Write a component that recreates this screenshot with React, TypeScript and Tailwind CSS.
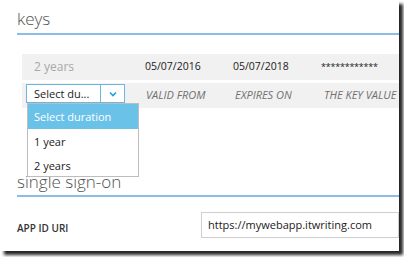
const font = { fontFamily: '"Open Sans", "Noto Sans", sans-serif' };

const Chevron = () => (
  <svg width="8" height="6" viewBox="0 0 8 6" className="block">
    <polyline points="1,1.5 4,4.5 7,1.5" fill="none" stroke="#1ba1e2" strokeWidth="1.6" />
  </svg>
);

const App = () => {
  const options = ["Select duration", "1 year", "2 years"];

  return (
    <div className="w-[404px] h-[257px] bg-white" style={font}>
      <div className="relative w-[399px] h-[251px] bg-white shadow-[4px_4px_3px_rgba(0,0,0,0.85)]">
        <div className="w-[399px] h-[251px] overflow-hidden">
          {/* keys */}
          <div className="pl-[17px] pt-[8px] h-[33px] text-[17px] font-light text-[#505050] leading-[22px]">
            keys
          </div>
          <div className="ml-[17px] h-[2px] bg-[#8cbde8]" />

          <div className="ml-[22px] mt-[19px]">
            <div className="flex items-center h-[26px] bg-[#f1f1f1] text-[10.5px] text-[#222]">
              <div className="w-[123px] pl-[12px] text-[12px] text-[#a8a8a8]">2 years</div>
              <div className="w-[88px]">05/07/2016</div>
              <div className="w-[88px]">05/07/2018</div>
              <div className="text-[9px] tracking-tight">************</div>
            </div>
            <div className="flex items-start h-[25px] mt-[3px] bg-[#f1f1f1]">
              <div className="w-[123px] pl-[4px] pt-[1px]">
                <div className="flex h-[19px] w-[99px] border border-[#6cb6e4] bg-white">
                  <div className="w-[74px] pl-[7px] text-[11px] leading-[17px] text-[#222] border-r border-[#6cb6e4]">
                    Select du...
                  </div>
                  <div className="flex-1 flex items-center justify-center">
                    <Chevron />
                  </div>
                </div>
              </div>
              <div className="flex items-center h-[25px] text-[11px] italic text-[#707070]">
                <div className="w-[88px] pl-[1px]">VALID FROM</div>
                <div className="w-[88px] pl-[2px]">EXPIRES ON</div>
                <div className="pl-[3px] whitespace-nowrap">THE KEY VALUE</div>
              </div>
            </div>
          </div>

          {/* single sign-on */}
          <div className="pl-[17px] mt-[64px] h-[23px] text-[17px] font-light text-[#505050] leading-[20px]">
            single sign-on
          </div>
          <div className="ml-[17px] h-[2px] bg-[#8cbde8]" />

          <div className="flex items-center mt-[15px] h-[26px]">
            <div className="w-[201px] pl-[17px] pt-[6px] text-[10px] font-semibold text-[#333]">APP ID URI</div>
            <div className="flex-1 h-[26px] border border-[#cfcfcf] pl-[6px] text-[11px] leading-[24px] text-[#222] whitespace-nowrap">
              https://mywebapp.itwriting.com
            </div>
          </div>
        </div>

        {/* open dropdown */}
        <div className="absolute left-[27px] top-[103px] w-[112px] h-[74px] bg-white border border-[#bdbdbd] text-[11px] text-[#222]">
          {options.map((o, i) => (
            <div
              key={o}
              className={
                i === 0
                  ? "h-[25px] pl-[6px] leading-[25px] bg-[#6bc2e9] text-white"
                  : "h-[24px] pl-[6px] leading-[26px]"
              }
            >
              {o}
            </div>
          ))}
        </div>
      </div>
    </div>
  );
};

export default App;
